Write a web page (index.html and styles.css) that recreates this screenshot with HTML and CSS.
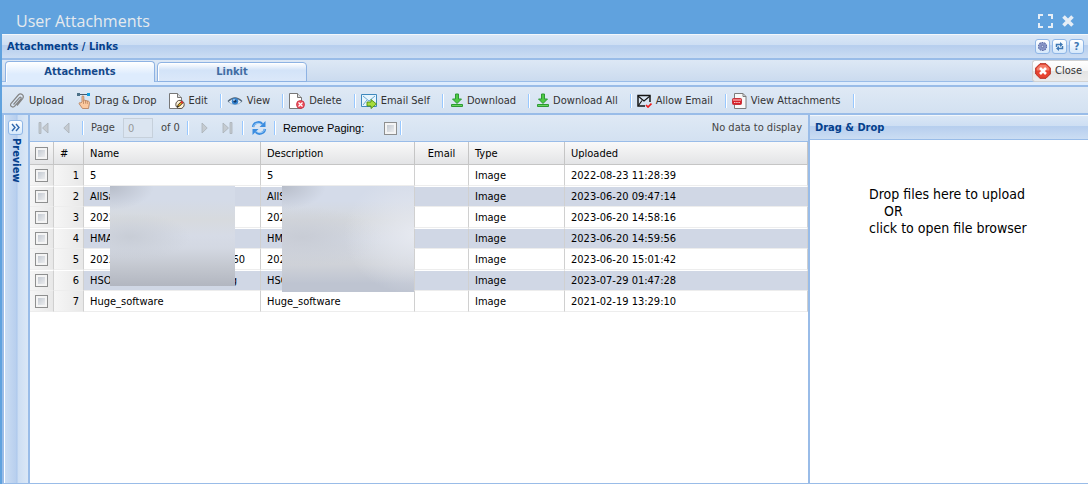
FILE: index.html
```
<!DOCTYPE html>
<html lang="en">
<head>
    <meta charset="UTF-8">
    <meta name="viewport" content="width=device-width, initial-scale=1.0">
    <title>User Attachments</title>
    <link rel="stylesheet" href="styles.css">
</head>
<body>

<header class="titlebar">
    <h1>User Attachments</h1>
    <button type="button" aria-label="Full screen">
        <svg width="15" height="14" viewBox="0 0 15 14"><path d="M1 5V1h4M10 1h4v4M14 9v4h-4M5 13H1V9" fill="none" stroke="#e6eef6" stroke-width="2"/></svg>
    </button>
    <button type="button" aria-label="Close window">
        <svg width="12" height="12" viewBox="0 0 12 12"><path d="M1.500 1.500l9 9M10.500 1.500l-9 9" fill="none" stroke="#e6eef6" stroke-width="3.600"/></svg>
    </button>
</header>

<div class="panel-header main-header">
    <h2>Attachments / Links</h2>
    <button type="button" class="tool" aria-label="Settings">
        <svg width="11" height="11" viewBox="0 0 11 11"><circle cx="5.500" cy="5.500" r="4" fill="#8e9cc9" stroke="#5f6fa8" stroke-width="1.200" stroke-dasharray="1.600 .9"/><circle cx="5.500" cy="5.500" r="3.200" fill="#8794c6"/><circle cx="5.500" cy="5.500" r="1.200" fill="#c9d4ee" stroke="#5a689f" stroke-width=".8"/></svg>
    </button>
    <button type="button" class="tool" aria-label="Refresh">
        <svg width="11" height="11" viewBox="0 0 11 11"><path d="M2.500 6V3.500h4M8.500 5v2.500h-4" fill="none" stroke="#3f78b4" stroke-width="1.500"/><path d="M6 1l3 2.500L6 6zM5 5L2 7.500 5 10z" fill="#3f78b4"/></svg>
    </button>
    <button type="button" class="tool help" aria-label="Help">?</button>
</div>

<nav class="tabs">
    <button type="button" class="tab active">Attachments</button>
    <button type="button" class="tab">Linkit</button>
    <button type="button" class="close">
        <svg width="16" height="16" viewBox="0 0 16 16"><path d="M5 .7h6L15.300 5v6L11 15.300H5L.7 11V5z" fill="#e8432f" stroke="#b52c1e"/><path d="M5.300 1.700h5.400l3.600 3.600v2.200H1.700V5.300z" fill="#f47d68"/><path d="M5 5l6 6M11 5l-6 6" stroke="#fff" stroke-width="2.600"/></svg>
        Close
    </button>
</nav>

<div class="toolbar">
    <button type="button" class="upload">
        <svg width="16" height="16" viewBox="0 0 16 16"><path d="M4.500 11.500l6-6.800c1-1.100 2.300 0 1.400 1.100l-6.200 7.300c-1.700 2-5.400.2-3.700-2.600L9.300 2c2.300-2.500 6.600.1 4.300 3.600L8 12.500" fill="none" stroke="#858585" stroke-width="1.200"/></svg>
        Upload
    </button>
    <button type="button">
        <svg width="14" height="16" viewBox="0 0 14 16"><path d="M5 9V3.800c0-1.300 1.800-1.300 1.800 0V7l4.700 1.200c1 .3 1 1.400.8 2.800l-.8 4.500H5.500L2.300 11c-.7-1.200.8-2 1.500-1z" fill="#fbc9a0" stroke="#b27a55" stroke-width=".8"/><path d="M1 1.500h11" stroke="#405a70"/><path d="M0 0h3v3H0z" fill="#4d7188"/><path d="M10 0h3v3h-3z" fill="#119fe0"/><path d="M6.500 7v4M8.500 7.600v3M10.300 8v3" stroke="#b27a55" stroke-width=".7"/></svg>
        Drag &amp; Drop
    </button>
    <button type="button">
        <svg width="16" height="16" viewBox="0 0 16 16"><path d="M.5.5h8l4 4v11H.5z" fill="#fff" stroke="#777"/><path d="M8.500.5v4h4" fill="#ddd" stroke="#777"/><circle cx="11" cy="11.500" r="4.200" fill="#fff3d8" stroke="#443933" stroke-width=".9"/><path d="M8.400 14l.7-2.200 3.300-3.400 1.500 1.400-3.400 3.400z" fill="#f1b31d" stroke="#111" stroke-width=".8"/><path d="M12 8.500l1.700 1.700" stroke="#e53030" stroke-width="1.800"/></svg>
        Edit
    </button>
    <span class="sep"></span>
    <button type="button">
        <svg width="16" height="16" viewBox="0 0 16 16"><path d="M1 8.500Q8 1.500 15 8.500Q8 14.500 1 8.500" fill="#eef5fb" stroke="#8ea3b8" stroke-width=".8"/><path d="M1 8.500Q8 1.500 15 8.500" fill="none" stroke="#56697d" stroke-width="1.400"/><circle cx="8" cy="8.300" r="3.300" fill="#3683cf"/><circle cx="8" cy="8.300" r="1.400" fill="#123763"/><circle cx="7" cy="7" r=".8" fill="#fff"/></svg>
        View
    </button>
    <span class="sep"></span>
    <button type="button">
        <svg width="16" height="16" viewBox="0 0 16 16"><path d="M.5.5h8l4 4v11H.5z" fill="#fff" stroke="#777"/><path d="M8.500.5v4h4" fill="#ddd" stroke="#777"/><circle cx="11.500" cy="11.500" r="4" fill="#ed4c5a" stroke="#c42f40" stroke-width=".8"/><path d="M9.500 9.500l4 4M13.500 9.500l-4 4" stroke="#fff" stroke-width="1.200"/></svg>
        Delete
    </button>
    <span class="sep"></span>
    <button type="button">
        <svg width="16" height="16" viewBox="0 0 16 16"><path d="M.5 1.500h15v12H.5z" fill="#e7f5fd" stroke="#3f88bd"/><path d="M2 3l6 5 6-5M2 12l4-5" fill="none" stroke="#6ba8d2"/><path d="M6 9h4V6.500l5.500 4.500-5.500 4.500V13H6z" fill="#a6dc3c" stroke="#4d8d13" stroke-width=".9"/></svg>
        Email Self
    </button>
    <span class="sep"></span>
    <button type="button" class="download">
        <svg width="12" height="15" viewBox="0 0 12 15"><path d="M4.500 1h3v5h3L6 10.500 1.500 6h3z" fill="#4fca45" stroke="#2d9a34"/><path d="M.5 11.500h11v2H.5z" fill="#68d55e" stroke="#2d9a34"/></svg>
        Download
    </button>
    <span class="sep"></span>
    <button type="button" class="download">
        <svg width="12" height="15" viewBox="0 0 12 15"><path d="M4.500 1h3v5h3L6 10.500 1.500 6h3z" fill="#4fca45" stroke="#2d9a34"/><path d="M.5 11.500h11v2H.5z" fill="#68d55e" stroke="#2d9a34"/></svg>
        Download All
    </button>
    <span class="sep"></span>
    <button type="button">
        <svg width="15" height="14" viewBox="0 0 15 14"><path d="M8 12H1V1.500h12V8" fill="none" stroke="#151515" stroke-width="1.500"/><path d="M1 2l6 5 6-5M1.500 11.500L5 6.500" fill="none" stroke="#151515" stroke-width="1.100"/><path d="M9 11l2 2 3.500-3.500" fill="none" stroke="#ef1c1c" stroke-width="1.700"/></svg>
        Allow Email
    </button>
    <span class="sep"></span>
    <button type="button">
        <svg width="15" height="16" viewBox="0 0 15 16"><path d="M2.500.5h8.500l3 3v12H2.500z" fill="#f8f8f8" stroke="#7c7c7c"/><path d="M11 .5v3h3" fill="none" stroke="#7c7c7c"/><rect x=".5" y="5.500" width="9" height="6" rx="1" fill="#d82029" stroke="#c5343b"/><path d="M1 6h8v2H1z" fill="#ee7a7e"/><path d="M2 9.500h6" stroke="#f6c6c8" stroke-dasharray="1.500 .7"/></svg>
        View Attachments
    </button>
    <span class="sep"></span>
</div>

<main class="content">
    <aside class="preview">
        <button type="button" class="tool" aria-label="Expand preview">
            <svg width="9" height="9" viewBox="0 0 9 9"><path d="M1 1l3 3.500L1 8M5 1l3 3.500L5 8" fill="none" stroke="#2f67ad" stroke-width="1.400"/></svg>
        </button>
        <h2>Preview</h2>
    </aside>

    <section class="grid">
        <div class="paging">
            <button type="button" class="first" disabled aria-label="First page">
                <svg width="11" height="12" viewBox="0 0 11 12"><path d="M1 .5h2v11H1zM10 1v10L4.500 6z" fill="#c5cbd1" stroke="#aab1b8" stroke-width=".8"/></svg>
            </button>
            <button type="button" class="prev" disabled aria-label="Previous page">
                <svg width="7" height="12" viewBox="0 0 7 12"><path d="M6 1v10L.8 6z" fill="#c5cbd1" stroke="#aab1b8" stroke-width=".8"/></svg>
            </button>
            <span class="sep"></span>
            <label for="page">Page</label>
            <input type="text" id="page" value="0" disabled>
            <span class="total">of 0</span>
            <span class="sep"></span>
            <button type="button" class="next" disabled aria-label="Next page">
                <svg width="7" height="12" viewBox="0 0 7 12"><path d="M1 1v10l5.200-5z" fill="#c5cbd1" stroke="#aab1b8" stroke-width=".8"/></svg>
            </button>
            <button type="button" class="last" disabled aria-label="Last page">
                <svg width="11" height="12" viewBox="0 0 11 12"><path d="M8 .5h2v11H8zM1 1v10l5.500-5z" fill="#c5cbd1" stroke="#aab1b8" stroke-width=".8"/></svg>
            </button>
            <span class="sep"></span>
            <button type="button" class="reload" aria-label="Reload">
                <svg width="16" height="16" viewBox="0 0 16 16"><path d="M2 7c.8-4.800 6.500-6 9.300-3M14 9c-.8 4.800-6.500 6-9.300 3" fill="none" stroke="#3b8de0" stroke-width="2.400"/><path d="M14.500 1v6h-6zM1.500 15V9h6z" fill="#3b8de0"/><path d="M2.500 6.500c1-3.300 5-4.300 8-1.900M13.500 9.500c-1 3.300-5 4.300-8 1.900" fill="none" stroke="#a9d4fb"/></svg>
            </button>
            <span class="sep"></span>
            <label for="removePaging" class="remove">Remove Paging:</label>
            <input type="checkbox" id="removePaging">
            <span class="sep"></span>
            <span class="status">No data to display</span>
        </div>

        <div class="table-wrap">
            <table>
                <colgroup>
                    <col class="c-check"><col class="c-num"><col class="c-name"><col class="c-desc"><col class="c-email"><col class="c-type"><col>
                </colgroup>
                <thead>
                    <tr><th><input type="checkbox" aria-label="Select all"></th><th>#</th><th>Name</th><th>Description</th><th class="center">Email</th><th>Type</th><th>Uploaded</th></tr>
                </thead>
                <tbody>
                    <tr><td><input type="checkbox" aria-label="Select row 1"></td><td>1</td><td>5</td><td>5</td><td></td><td>Image</td><td>2022-08-23 11:28:39</td></tr>
                    <tr><td><input type="checkbox" aria-label="Select row 2"></td><td>2</td><td>AllSa</td><td>AllS</td><td></td><td>Image</td><td>2023-06-20 09:47:14</td></tr>
                    <tr><td><input type="checkbox" aria-label="Select row 3"></td><td>3</td><td>2022</td><td>202</td><td></td><td>Image</td><td>2023-06-20 14:58:16</td></tr>
                    <tr><td><input type="checkbox" aria-label="Select row 4"></td><td>4</td><td>HMA</td><td>HM</td><td></td><td>Image</td><td>2023-06-20 14:59:56</td></tr>
                    <tr><td><input type="checkbox" aria-label="Select row 5"></td><td>5</td><td><div class="split"><span>2022</span><span class="tail">60</span></div></td><td>202</td><td></td><td>Image</td><td>2023-06-20 15:01:42</td></tr>
                    <tr><td><input type="checkbox" aria-label="Select row 6"></td><td>6</td><td><div class="split"><span>HSO</span><span class="tail tail-g">g</span></div></td><td>HSC</td><td></td><td>Image</td><td>2023-07-29 01:47:28</td></tr>
                    <tr><td><input type="checkbox" aria-label="Select row 7"></td><td>7</td><td>Huge_software</td><td>Huge_software</td><td></td><td>Image</td><td>2021-02-19 13:29:10</td></tr>
                </tbody>
            </table>
            <div class="mask mask-name"></div>
            <div class="mask mask-desc"></div>
        </div>
    </section>

    <section class="drop">
        <div class="panel-header"><h2>Drag &amp; Drop</h2></div>
        <button type="button" class="dropzone">
            <span>Drop files here to upload</span>
            <span class="or">OR</span>
            <span>click to open file browser</span>
        </button>
    </section>
</main>

</body>
</html>
```
FILE: styles.css
```
* { box-sizing: border-box; }
body {
    margin: 0;
    height: 100vh;
    display: flex;
    flex-direction: column;
    overflow: hidden;
    border-left: 2px solid #60a2de;
    background: #fff;
    color: #000;
    font: 11px/14px "DejaVu Sans Condensed", Tahoma, "DejaVu Sans", sans-serif;
}
h1, h2 { margin: 0; }
svg { display: block; flex: none; }
button {
    display: flex;
    align-items: center;
    flex: none;
    margin: 0;
    padding: 0;
    border: 0;
    background: none;
    color: #333;
    font: inherit;
    white-space: nowrap;
    cursor: pointer;
}

/* window title */
.titlebar {
    display: flex;
    align-items: center;
    flex: none;
    gap: 9px;
    height: 34px;
    margin-left: -2px;
    padding: 8px 14px 0 16px;
    background: #60a2de;
}
.titlebar h1 {
    flex: 1;
    color: #e6eaee;
    font: 16px/24px "Open Sans", "Noto Sans", sans-serif;
}

/* panel headers */
.panel-header {
    display: flex;
    align-items: center;
    flex: none;
    height: 25px;
    padding: 0 4px 0 5px;
    border-top: 1px solid #f3f7fb;
    border-bottom: 1px solid #99bce8;
    background: linear-gradient(#dae7f6, #cddef3 45%, #abc7ec 46%, #b8cfee 50%, #cbddf3);
}
.panel-header h2 {
    flex: 1;
    color: #04408c;
    font-size: 11px;
    line-height: 14px;
}
.main-header { height: 26px; gap: 2px; border-bottom-width: 2px; }
.tool {
    width: 15px;
    height: 15px;
    justify-content: center;
    border: 1px solid #8fb6e6;
    border-radius: 3px;
    background: linear-gradient(#fff, #d5e8fb);
}
.help { color: #3f78b4; font-weight: bold; }

/* tabs */
.tabs {
    display: flex;
    align-items: flex-end;
    flex: none;
    gap: 2px;
    height: 27px;
    padding: 0 0 3px 3px;
    border-bottom: 2px solid #99bce8;
    background: linear-gradient(#dde8f5, #cbdbef 21px, #99bce8 21px, #99bce8 22px, #deecfd 22px);
}
.tab {
    width: 150px;
    height: 20px;
    justify-content: center;
    border: 1px solid #8db2e3;
    border-radius: 4px 4px 0 0;
    background: linear-gradient(#fff, #d3e3f8 40%, #dbe8f9);
    box-shadow: inset 1px 1px #fff;
    color: #416da3;
    font-weight: bold;
}
.tab.active {
    height: 21px;
    border-bottom: 0;
    background: linear-gradient(#fff, #deecfd 60%);
    color: #15498b;
}
.close {
    align-self: center;
    gap: 4px;
    height: 22px;
    margin-left: auto;
    padding: 0 6px 0 2px;
    border: 1px solid #d1d1d1;
    border-right: 0;
    border-radius: 3px 0 0 3px;
    background: linear-gradient(#fff, #f5f5f5 48%, #e4e4e4 52%, #ebebeb);
}

/* toolbars */
.toolbar, .paging {
    display: flex;
    align-items: center;
    flex: none;
    background: linear-gradient(#dfe9f5, #d3e1f1);
}
.toolbar {
    height: 28px;
    padding: 1px 0 0 7px;
    border-bottom: 2px solid #99bce8;
}
.toolbar button { gap: 4px; padding-right: 12px; }
.toolbar .upload { padding-right: 13px; }
.sep {
    flex: none;
    width: 2px;
    height: 14px;
    border-left: 1px solid #98c8ff;
    border-right: 1px solid #fff;
}
.toolbar .sep { margin-right: 5px; }
.toolbar .download { padding-left: 2px; }

.content { display: flex; flex: 1; min-height: 0; border-bottom: 1px solid #99bce8; }

.preview {
    display: flex;
    flex-direction: column;
    align-items: center;
    flex: none;
    gap: 3px;
    width: 28px;
    padding: 5px 1px 0 0;
    border-left: 2px solid #99bce8;
    border-right: 2px solid #99bce8;
    background: linear-gradient(90deg, #fff 1px, #cbddf3 1px, #b8cfee 12px, #abc7ec 13px, #cddef3 14px, #dae7f6);
}
.preview h2 {
    color: #04408c;
    font-size: 11px;
    line-height: 14px;
    writing-mode: vertical-rl;
}

/* grid */
.grid { display: flex; flex: 1; flex-direction: column; min-width: 0; }
.paging { height: 27px; padding: 0 6px 0 8px; border-bottom: 1px solid #99bce8; color: #444; }
.prev { margin: 0 12px 0 14px; }
.paging label { margin-left: 7px; }
#page {
    width: 30px;
    height: 20px;
    margin: 0 8px;
    padding: 0 4px;
    border: 1px solid #c6d0db;
    background: #dbe5f1;
    color: #999;
    font: inherit;
}
.total { margin-right: 7px; }
.next { margin: 0 14px 0 12px; }
.last { margin-right: 9px; }
.reload { margin: 0 7px; }
.remove { color: #000; font: 11px/14px "Liberation Sans", Arial, sans-serif; }
.paging input[type="checkbox"] { margin: 0 3px 0 20px; }
.status { margin-left: auto; }
input[type="checkbox"] {
    appearance: none;
    display: block;
    flex: none;
    width: 13px;
    height: 13px;
    margin: 0;
    border: 1px solid #8e8f8f;
    background: linear-gradient(135deg, #b9c0ca, #f6f6f6);
    box-shadow: inset 0 0 0 2px #f4f4f4;
}

.table-wrap { position: relative; }
table {
    width: 100%;
    table-layout: fixed;
    border-collapse: separate;
    border-spacing: 0;
}
.c-check { width: 24px; }
.c-num { width: 30px; }
.c-name { width: 177px; }
.c-desc { width: 154px; }
.c-email { width: 54px; }
.c-type { width: 96px; }
th, td {
    padding: 2px 6px 0;
    border-right: 1px solid #d0d0d0;
    text-align: left;
    font-weight: normal;
    white-space: nowrap;
}
th {
    height: 23px;
    border-color: #c5c5c5;
    border-bottom: 1px solid #c5c5c5;
    background: linear-gradient(#f9f9f9, #e3e4e6);
}
td { height: 21px; border-bottom: 1px solid #ededed; }
th:first-child, td:first-child { padding: 0 5px; }
.center { text-align: center; }
tbody tr:nth-child(even) td { padding-top: 0; border-top: 1px solid #fff; background: #d0d7e5; }
tbody td:first-child, tbody tr td:nth-child(2), tbody tr:nth-child(even) td:nth-child(-n+2) {
    background: linear-gradient(90deg, #f6f6f6, #e8e8e8);
}
td:nth-child(2) { padding-right: 4px; text-align: right; }
.split { display: flex; justify-content: space-between; }
.tail { margin-right: 9px; }
.tail-g { margin-right: 17px; }

/* blurred private values */
.mask { position: absolute; top: 44px; }
.mask-name {
    left: 80px;
    width: 125px;
    height: 100px;
    background:
        radial-gradient(ellipse 44px 24px at 0 0, #b7bdc9, #b7bdc900),
        radial-gradient(ellipse 60px 24px at 20px 51px, #c8cdd6, #c8cdd600),
        linear-gradient(#d4dbe8 14%, #d7dade 34%, #d6dbe6 50%, #d3d8e2 62%, #c4c8d0 80%, #b2b6c0);
}
.mask-desc {
    left: 252px;
    width: 132px;
    height: 106px;
    background:
        radial-gradient(ellipse 44px 24px at 0 0, #b7bdc9, #b7bdc900),
        radial-gradient(ellipse 70px 60px at 100% 48px, #e6e9f0, #e6e9f000),
        radial-gradient(ellipse 80px 30px at 20px 51px, #c8ccd5, #c8ccd500),
        linear-gradient(#d4dbe9 14%, #d5d8dc 32%, #d4d9e3 50%, #cfd2d8 74%, #bec4d1 92%);
}

/* upload area */
.drop {
    display: flex;
    flex: none;
    flex-direction: column;
    width: 26%;
    max-width: 280px;
    border-left: 2px solid #99bce8;
}
.dropzone {
    flex: 1;
    flex-direction: column;
    align-items: flex-start;
    padding: 46px 0 0 59px;
    color: #000;
    font-size: 14px;
    line-height: 17px;
}
.or { padding-left: 15px; }
```
